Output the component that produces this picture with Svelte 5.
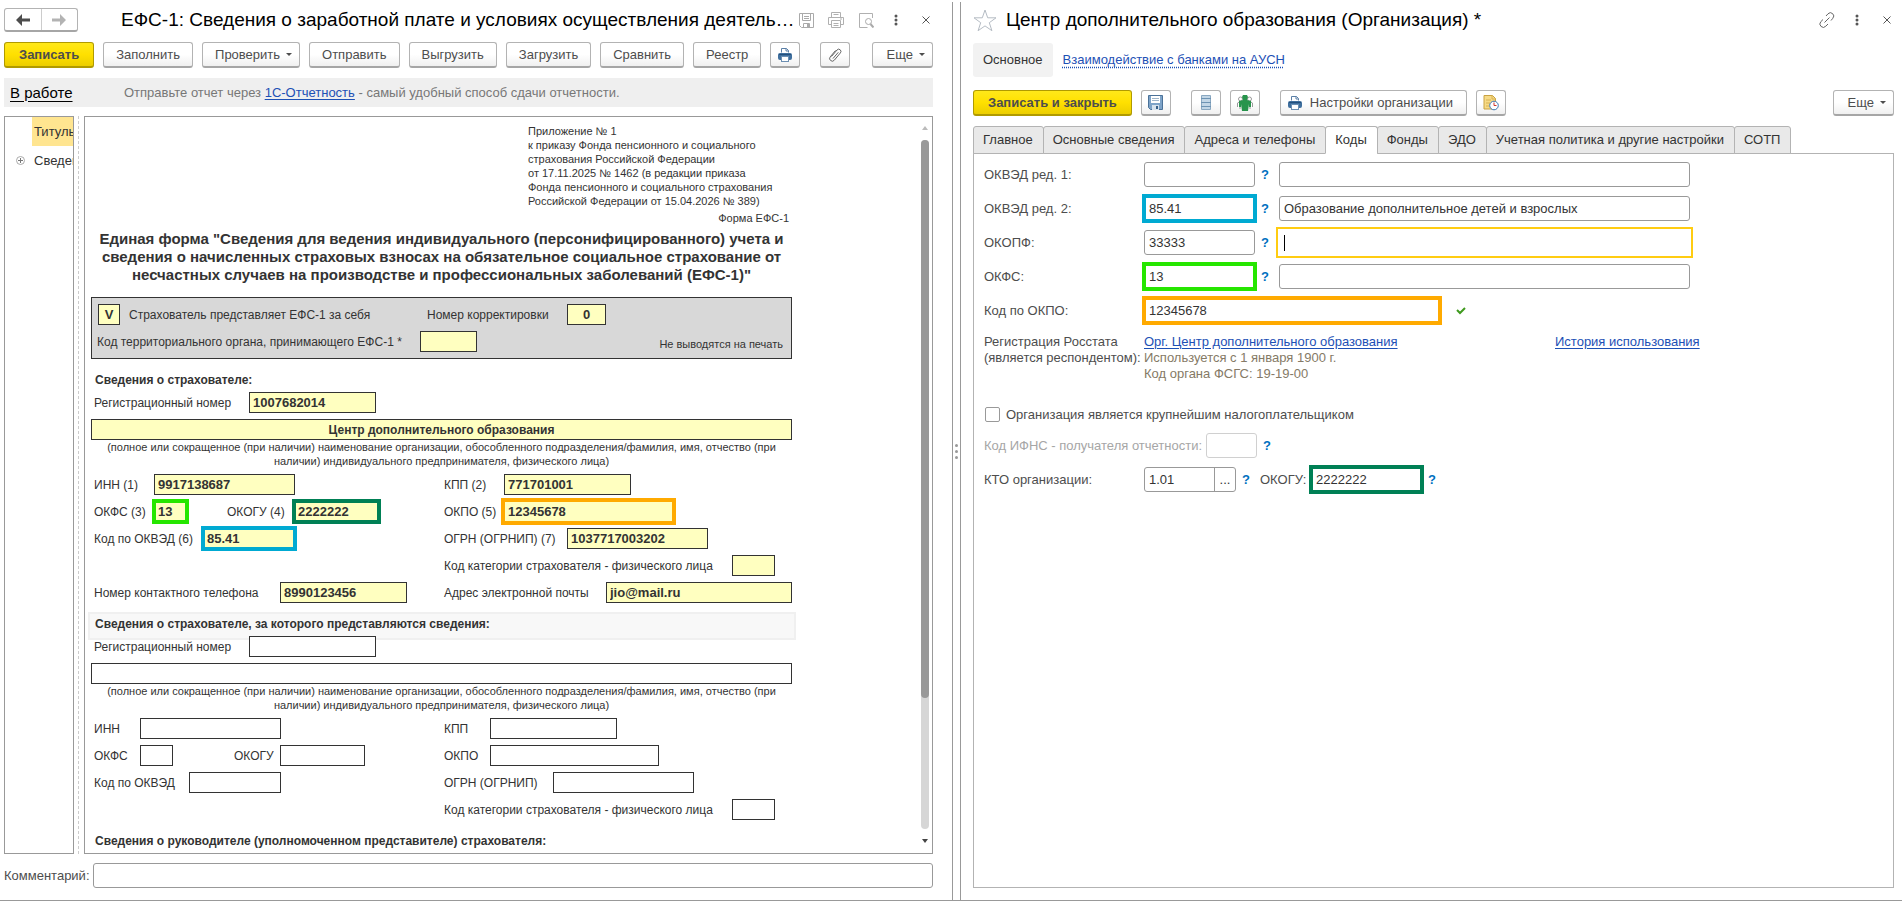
<script lang="ts">
type Field = {
  label: string
  labelWidth: number
  width: number
  value?: string
  mark?: 'green' | 'blue' | 'teal' | 'orange'
  gap?: number
}
type Row = { left: Field[]; right: Field[] }

const commands = ['Отправить', 'Выгрузить', 'Загрузить', 'Сравнить', 'Реестр']

const tabs = [
  'Главное',
  'Основные сведения',
  'Адреса и телефоны',
  'Коды',
  'Фонды',
  'ЭДО',
  'Учетная политика и другие настройки',
  'СОТП',
]
const activeTab = 'Коды'

const note =
  '(полное или сокращенное (при наличии) наименование организации, обособленного подразделения/фамилия, имя, отчество (при наличии) индивидуального предпринимателя, физического лица)'

const insurer: Row[] = [
  {
    left: [{ label: 'ИНН (1)', labelWidth: 60, width: 141, value: '9917138687' }],
    right: [{ label: 'КПП (2)', labelWidth: 60, width: 127, value: '771701001' }],
  },
  {
    left: [
      { label: 'ОКФС (3)', labelWidth: 60, width: 33, value: '13', mark: 'green' },
      { label: 'ОКОГУ (4)', labelWidth: 67, width: 85, value: '2222222', mark: 'teal', gap: 40 },
    ],
    right: [{ label: 'ОКПО (5)', labelWidth: 60, width: 169, value: '12345678', mark: 'orange' }],
  },
  {
    left: [{ label: 'Код по ОКВЭД (6)', labelWidth: 109, width: 92, value: '85.41', mark: 'blue' }],
    right: [{ label: 'ОГРН (ОГРНИП) (7)', labelWidth: 123, width: 141, value: '1037717003202' }],
  },
  {
    left: [],
    right: [{ label: 'Код категории страхователя - физического лица', labelWidth: 288, width: 43, value: '' }],
  },
  {
    left: [{ label: 'Номер контактного телефона', labelWidth: 186, width: 127, value: '8990123456' }],
    right: [{ label: 'Адрес электронной почты', labelWidth: 162, width: 186, value: 'jio@mail.ru' }],
  },
]

const represented: Row[] = [
  {
    left: [{ label: 'ИНН', labelWidth: 46, width: 141 }],
    right: [{ label: 'КПП', labelWidth: 46, width: 127 }],
  },
  {
    left: [
      { label: 'ОКФС', labelWidth: 46, width: 33 },
      { label: 'ОКОГУ', labelWidth: 46, width: 85, gap: 61 },
    ],
    right: [{ label: 'ОКПО', labelWidth: 46, width: 169 }],
  },
  {
    left: [{ label: 'Код по ОКВЭД', labelWidth: 95, width: 92 }],
    right: [{ label: 'ОГРН (ОГРНИП)', labelWidth: 109, width: 141 }],
  },
  {
    left: [],
    right: [{ label: 'Код категории страхователя - физического лица', labelWidth: 288, width: 43 }],
  },
]

const codes = [
  { id: 'okved1', label: 'ОКВЭД ред. 1:', value: '', name: '', mark: '' },
  { id: 'okved2', label: 'ОКВЭД ред. 2:', value: '85.41', name: 'Образование дополнительное детей и взрослых', mark: 'blue' },
  { id: 'okopf', label: 'ОКОПФ:', value: '33333', name: '', mark: '' },
  { id: 'okfs', label: 'ОКФС:', value: '13', name: '', mark: 'green' },
]
</script>

{#snippet printer(muted: boolean)}
  {#if muted}
    <svg viewBox="0 0 16 16" width="16" height="16" aria-hidden="true">
      <path d="M3.5 5.5v-5h9v5M3.5 12.5h-3v-7h15v7h-3M3.5 8.5h9v7h-9zM5.5 11.5h5M5.5 13.5h5M5.5 2.5h5M12 7h2" fill="none" stroke="#b0b0b0" />
    </svg>
  {:else}
    <svg viewBox="0 0 16 16" width="16" height="16" aria-hidden="true">
      <path d="M4.5 5.5v-4h5l2 2v2" fill="#fff" stroke="#5a7fa6" />
      <path d="M9 1.5v2.5h2.500" fill="none" stroke="#5a7fa6" />
      <rect x="1" y="6" width="14" height="7" rx="2" fill="#3f6f9e" />
      <path d="M2 7.500h12" stroke="#24507d" />
      <rect x="4.5" y="9.5" width="7" height="5" fill="#fff" stroke="#6c8fb2" />
    </svg>
  {/if}
{/snippet}

{#snippet dots()}
  <svg viewBox="0 0 4 12" width="4" height="12" aria-hidden="true">
    <circle cx="2" cy="2" r="1.500" fill="#555" /><circle cx="2" cy="6" r="1.500" fill="#555" /><circle cx="2" cy="10" r="1.500" fill="#555" />
  </svg>
{/snippet}

{#snippet cross()}
  <svg viewBox="0 0 8 8" width="8" height="8" aria-hidden="true">
    <path d="M.5.5l7 7M7.5.5l-7 7" stroke="#555" fill="none" />
  </svg>
{/snippet}

{#snippet cell(field: Field)}
  <label class="cell" style:margin-left="{field.gap ?? 0}px">
    <span style:width="{field.labelWidth}px">{field.label}</span>
    <input
      class="box {field.mark ? `mark mark--${field.mark}` : ''}"
      class:box--filled={field.value !== undefined}
      style:width="{field.width}px"
      value={field.value ?? ''}
    />
  </label>
{/snippet}

{#snippet block(title: string, rows: Row[], filled: boolean, number: string, company: string)}
  <section class="block">
    <h3 class:shaded={!filled}>{title}</h3>
    <div class="row">
      {@render cell({ label: 'Регистрационный номер', labelWidth: 155, width: 127, value: filled ? number : undefined })}
    </div>
    <input class="box box--wide" class:box--filled={filled} value={company} aria-label="Наименование" />
    <p class="note">{note}</p>
    {#each rows as row}
      <div class="row">
        <div class="half">
          {#each row.left as field}{@render cell(field)}{/each}
        </div>
        <div class="half">
          {#each row.right as field}{@render cell(field)}{/each}
        </div>
      </div>
    {/each}
  </section>
{/snippet}

<div class="app">
  <main class="pane pane--report">
    <header class="title">
      <div class="history">
        <button aria-label="Назад">
          <svg viewBox="0 0 14 12" width="14" height="12"><path d="M0 6l6-6v4.500h8v3H6V12z" fill="#4d4d4d" /></svg>
        </button>
        <button aria-label="Вперед">
          <svg viewBox="0 0 14 12" width="14" height="12"><path d="M14 6L8 0v4.500H0v3h8V12z" fill="#b3b3b3" /></svg>
        </button>
      </div>
      <h1>ЕФС-1: Сведения о заработной плате и условиях осуществления деятель…</h1>
      <div class="window-tools">
        <button aria-label="Сохранить">
          <svg viewBox="0 0 15 15" width="15" height="15">
            <path d="M.5.5h14v14H2.500l-2-2zM3.500.5v7h8v-7M5 3.500h5M5 5.500h5M4.500 14.500v-4h6v4" fill="none" stroke="#aaa" />
            <path d="M8 11h2v3H8z" fill="#aaa" />
          </svg>
        </button>
        <button aria-label="Печать">{@render printer(true)}</button>
        <button aria-label="Просмотр">
          <svg viewBox="0 0 15 15" width="15" height="15">
            <path d="M13.500 5V.5H.5v14h8" fill="none" stroke="#b0b0b0" />
            <circle cx="9.500" cy="8.500" r="3" fill="none" stroke="#aaa" />
            <path d="M11.500 11l3 3.500" stroke="#aaa" stroke-width="2" />
          </svg>
        </button>
        <button aria-label="Дополнительно">{@render dots()}</button>
        <button aria-label="Закрыть">{@render cross()}</button>
      </div>
    </header>

    <div class="toolbar">
      <button class="btn btn--primary">Записать</button>
      <button class="btn">Заполнить</button>
      <button class="btn btn--menu">Проверить<i class="caret"></i></button>
      {#each commands as command}
        <button class="btn">{command}</button>
      {/each}
      <button class="btn btn--icon" aria-label="Печать">{@render printer(false)}</button>
      <button class="btn btn--icon btn--apart" aria-label="Файлы">
        <svg viewBox="0 0 14 14" width="14" height="14">
          <path d="M3.500 8.500L9 2a2.200 2.200 0 0 1 3.400 2.900l-6 7.200a2.600 2.600 0 0 1-4.200-3.200L7.500 2.500M5 10.500l5.300-6.200" fill="none" stroke="#666" />
        </svg>
      </button>
      <button class="btn btn--menu btn--more">Еще<i class="caret"></i></button>
    </div>

    <div class="status">
      <a class="state" href="#state">В работе</a>
      <span>Отправьте отчет через <a class="link" href="#report">1С-Отчетность</a> - самый удобный способ сдачи отчетности.</span>
    </div>

    <div class="workspace">
      <ul class="tree">
        <li><span class="tree__item tree__item--active">Титульный лист</span></li>
        <li>
          <svg viewBox="0 0 9 9" width="9" height="9" aria-hidden="true">
            <circle cx="4.500" cy="4.500" r="4" fill="none" stroke="#aaa" /><path d="M2 4.500h5M4.500 2v5" stroke="#777" />
          </svg>
          <span class="tree__item">Сведения</span>
        </li>
      </ul>
      <div class="divider"></div>
      <div class="document">
        <div class="sheet">
          <p class="appendix">
            Приложение № 1<br />
            к приказу Фонда пенсионного и социального<br />
            страхования Российской Федерации<br />
            от 17.11.2025 № 1462 (в редакции приказа<br />
            Фонда пенсионного и социального страхования<br />
            Российской Федерации от 15.04.2026 № 389)
          </p>
          <p class="form-code">Форма ЕФС-1</p>
          <h2>
            Единая форма "Сведения для ведения индивидуального (персонифицированного) учета и<br />
            сведения о начисленных страховых взносах на обязательное социальное страхование от<br />
            несчастных случаев на производстве и профессиональных заболеваний (ЕФС-1)"
          </h2>
          <div class="summary">
            <div class="row">
              <label class="cell self">
                <input class="box box--filled box--center" value="V" />
                <span>Страхователь представляет ЕФС-1 за себя</span>
              </label>
              <label class="cell correction">
                <span>Номер корректировки</span>
                <input class="box box--filled box--center" value="0" />
              </label>
            </div>
            <div class="row">
              <label class="cell authority">
                <span>Код территориального органа, принимающего ЕФС-1 *</span>
                <input class="box box--filled" value="" />
              </label>
              <span class="not-printed">Не выводятся на печать</span>
            </div>
          </div>
          {@render block('Сведения о страхователе:', insurer, true, '1007682014', 'Центр дополнительного образования')}
          {@render block('Сведения о страхователе, за которого представляются сведения:', represented, false, '', '')}
          <section class="block">
            <h3>Сведения о руководителе (уполномоченном представителе) страхователя:</h3>
          </section>
        </div>
        <div class="scroll" aria-hidden="true">
          <i class="scroll__up"></i>
          <div class="scroll__track"><div class="scroll__thumb"></div></div>
          <i class="scroll__down"></i>
        </div>
      </div>
    </div>

    <label class="comment">
      <span>Комментарий:</span>
      <input class="input" />
    </label>
  </main>

  <div class="splitter" aria-hidden="true"><i></i><i></i><i></i></div>

  <aside class="pane pane--org">
    <header class="title">
      <svg class="star" viewBox="0 0 24 23" width="24" height="23" aria-hidden="true">
        <path d="M12 1l2.700 7.800h8.300l-6.700 4.900 2.600 8L12 16.900l-6.900 4.800 2.600-8L1 8.800h8.300z" fill="none" stroke="#b5bcc4" />
      </svg>
      <h1>Центр дополнительного образования (Организация) *</h1>
      <div class="window-tools">
        <button aria-label="Ссылка">
          <svg viewBox="0 0 16 16" width="16" height="16">
            <path d="M7 4l2-2.200a3.100 3.100 0 0 1 4.800 4.500L12 8.500M9 12l-2.200 2.200a3.100 3.100 0 0 1-5-4.500L4 7.500M5.500 10.500l5-5" fill="none" stroke="#666" />
          </svg>
        </button>
        <button aria-label="Дополнительно">{@render dots()}</button>
        <button aria-label="Закрыть">{@render cross()}</button>
      </div>
    </header>

    <nav class="sections">
      <a class="sections__current" href="#main">Основное</a>
      <a class="sections__link" href="#banks">Взаимодействие с банками на АУСН</a>
    </nav>

    <div class="toolbar toolbar--org">
      <button class="btn btn--primary">Записать и закрыть</button>
      <button class="btn btn--icon" aria-label="Записать">
        <svg viewBox="0 0 15 15" width="15" height="15">
          <path d="M.5.5h14v14H2.500l-2-2z" fill="#7da3c8" stroke="#4b7299" />
          <path d="M3 1h9v7H3z" fill="#fff" /><path d="M4 3.500h7M4 5.500h7" stroke="#9db4c9" />
          <path d="M4 10h7v5H4z" fill="#d6e2ed" /><path d="M8 11h2v3H8z" fill="#355f88" />
        </svg>
      </button>
      <button class="btn btn--icon btn--apart" aria-label="Список">
        <svg viewBox="0 0 10 15" width="10" height="15">
          <path d="M.5.5h9v14h-9z" fill="#c2d6e6" stroke="#8aa8c1" /><path d="M0 3.500h10M0 7.500h10M0 11.500h10" stroke="#6d93b3" />
        </svg>
      </button>
      <button class="btn btn--icon" aria-label="Контрагент">
        <svg viewBox="0 0 16 16" width="16" height="16">
          <g fill="#fff" stroke="#9a9a9a"><circle cx="3.500" cy="4" r="2" /><circle cx="12.500" cy="4" r="2" /><path d="M3 14V6.500L.5 8v4M13 14V6.500L15.500 8v4" /></g>
          <path d="M6 0h4l1 2-1 3 4 1v6h-2v-3l-1 7H5l-1-7v3H2V6l4-1-1-3z" fill="#28944c" />
        </svg>
      </button>
      <button class="btn btn--apart btn--settings">{@render printer(false)}<span>Настройки организации</span></button>
      <button class="btn btn--icon" aria-label="История">
        <svg viewBox="0 0 16 16" width="16" height="16">
          <path d="M1 .5h8.500l3 3V14H1z" fill="#f6da86" stroke="#c9a243" /><path d="M9 .5v3.500h3.500M3 5h5M3 8h4M3 11h3" fill="none" stroke="#d8b252" />
          <circle cx="11" cy="10.500" r="4.300" fill="#fff" stroke="#3f78b5" /><path d="M11 7.500v3h2.500" fill="none" stroke="#d0342c" />
        </svg>
      </button>
      <button class="btn btn--menu btn--more">Еще<i class="caret"></i></button>
    </div>

    <div class="tabs" role="tablist">
      {#each tabs as tab}
        <button class="tab" class:tab--active={tab === activeTab} role="tab" aria-selected={tab === activeTab}>{tab}</button>
      {/each}
    </div>

    <div class="panel">
      {#each codes as code}
        <div class="line">
          <label class="caption" for={code.id}>{code.label}</label>
          <input class="input code {code.mark ? `mark mark--${code.mark}` : ''}" id={code.id} value={code.value} />
          <a class="help" href="#help">?</a>
          {#if code.id === 'okopf'}
            <div class="input name name--focus"><i class="cursor"></i><input aria-label={code.label} /></div>
          {:else}
            <input class="input name" value={code.name} aria-label={code.label} />
          {/if}
        </div>
      {/each}
      <div class="line">
        <label class="caption" for="okpo">Код по ОКПО:</label>
        <input class="input okpo mark mark--orange" id="okpo" value="12345678" />
        <svg class="check" viewBox="0 0 10 8" width="10" height="8" aria-hidden="true">
          <path d="M1 3l3 3 5-5" fill="none" stroke="#3f9a1e" stroke-width="2" />
        </svg>
      </div>

      <div class="registration">
        <span class="caption">Регистрация Росстата<br />(является респондентом):</span>
        <div class="registration__info">
          <a class="link" href="#org">Орг. Центр дополнительного образования</a><br />
          Используется с 1 января 1900 г.<br />
          Код органа ФСГС: 19-19-00
        </div>
        <a class="link" href="#history">История использования</a>
      </div>

      <label class="largest">
        <input type="checkbox" />
        <span>Организация является крупнейшим налогоплательщиком</span>
      </label>

      <div class="line line--disabled">
        <label for="ifns">Код ИФНС - получателя отчетности:</label>
        <input class="input ifns" id="ifns" disabled />
        <a class="help" href="#help">?</a>
      </div>

      <div class="line">
        <label class="caption" for="kto">КТО организации:</label>
        <div class="input picker">
          <input id="kto" value="1.01" />
          <button aria-label="Выбрать">...</button>
        </div>
        <a class="help" href="#help">?</a>
        <label class="okogu-label" for="okogu">ОКОГУ:</label>
        <input class="input code mark mark--teal" id="okogu" value="2222222" />
        <a class="help" href="#help">?</a>
      </div>
    </div>
  </aside>
</div>

<style>
  :global(body) {
    margin: 0;
    background: #fff;
  }

  .app {
    display: grid;
    grid-template-columns: minmax(0, 953fr) 7px minmax(0, 942fr);
    box-sizing: border-box;
    min-height: 100vh;
    padding-top: 2px;
    border-bottom: 1px solid #999;
    font: 13px/16px 'Liberation Sans', Arial, sans-serif;
    color: #4d4d4d;
  }

  .app :is(*, ::before, ::after) {
    box-sizing: border-box;
  }

  :where(.app) :where(input, button) {
    margin: 0;
    color: inherit;
    font: inherit;
  }

  :where(.app) :where(h1, h2, h3, p, ul) {
    margin: 0;
    padding: 0;
  }

  .pane {
    display: flex;
    flex-direction: column;
  }

  .pane--report {
    padding: 6px 19px 12px 4px;
    border-right: 1px solid #999;
  }

  .pane--org {
    padding: 6px 8px 12px 12px;
    border-left: 1px solid #999;
  }

  .title {
    display: flex;
    align-items: center;
    height: 24px;
  }

  h1 {
    flex: 1;
    min-width: 0;
    color: #000;
    font-size: 19px;
    font-weight: 400;
    line-height: 24px;
    white-space: nowrap;
  }

  .history {
    display: flex;
    width: 74px;
    height: 24px;
    margin-right: 43px;
    border: 1px solid #b3b3b3;
    border-bottom: 2px solid #a6a6a6;
    border-radius: 3px;
  }

  .history button {
    display: flex;
    flex: 1;
    align-items: center;
    justify-content: center;
    padding: 0;
    border: 0;
    background: none;
  }

  .history button + button {
    border-left: 1px solid #ccc;
  }

  .window-tools {
    display: flex;
    margin-right: -8px;
  }

  .window-tools button {
    display: flex;
    align-items: center;
    justify-content: center;
    width: 30px;
    height: 24px;
    padding: 0;
    border: 0;
    background: none;
  }

  .star {
    margin-right: 9px;
  }

  .toolbar {
    display: flex;
    gap: 9px;
    margin-top: 10px;
  }

  .toolbar--org {
    margin-top: 13px;
  }

  .btn {
    display: flex;
    align-items: center;
    justify-content: center;
    height: 26px;
    padding: 0 12px;
    border: 1px solid #b3b3b3;
    border-bottom: 2px solid #a6a6a6;
    border-radius: 3px;
    background: linear-gradient(#fff 50%, #f0f0f0);
    white-space: nowrap;
  }

  .btn--primary {
    padding: 0 14px;
    border-color: #b09a00;
    background: linear-gradient(#ffe81a, #ffe000 50%, #ecce00);
    font-weight: 700;
  }

  .btn--menu {
    padding-right: 7px;
  }

  .btn--icon {
    width: 30px;
    padding: 0;
  }

  .btn--apart {
    margin-left: 11px;
  }

  .btn--settings {
    gap: 7px;
    padding: 0 13px 0 6px;
  }

  .btn--more {
    margin-left: auto;
    padding-left: 14px;
  }

  .caret {
    margin-left: 6px;
    border: 3px solid transparent;
    border-top-color: #4d4d4d;
    border-bottom: 0;
  }

  .status {
    display: flex;
    align-items: center;
    height: 29px;
    margin-top: 10px;
    padding-left: 6px;
    background: #efefef;
    color: #777;
  }

  .state {
    width: 114px;
    color: #000;
    font-size: 15px;
    text-underline-offset: 3px;
  }

  .link {
    color: #1d50b5;
    text-underline-offset: 2px;
  }

  .workspace {
    display: flex;
    flex: 1;
    margin-top: 9px;
  }

  .tree {
    width: 70px;
    overflow: hidden;
    border: 1px solid #999;
    list-style: none;
    color: #333;
  }

  .tree li {
    display: flex;
    align-items: center;
    justify-content: flex-end;
    height: 29px;
    padding-left: 11px;
  }

  .tree li svg {
    flex-shrink: 0;
    margin-right: auto;
  }

  .tree__item {
    width: 41px;
    padding: 7px 0 6px 2px;
    overflow: hidden;
    white-space: nowrap;
  }

  .tree__item--active {
    background: #ffe590;
  }

  .divider {
    margin: 0 5px 0 4px;
    border-left: 1px dashed #ccc;
  }

  .document {
    display: flex;
    flex: 1;
    justify-content: space-between;
    padding: 0 3px 4px 6px;
    border: 1px solid #999;
    color: #333;
    font-size: 12px;
  }

  .sheet {
    width: 701px;
    padding-top: 7px;
  }

  .appendix,
  .form-code,
  .note,
  .not-printed {
    font-size: 11px;
    line-height: 14px;
  }

  .appendix {
    padding-left: 437px;
  }

  .form-code {
    margin-top: 3px;
    padding-right: 3px;
    text-align: right;
  }

  h2 {
    margin-top: 5px;
    font-size: 15px;
    line-height: 18px;
    text-align: center;
    white-space: nowrap;
  }

  .summary {
    height: 62px;
    margin-top: 13px;
    padding: 0 8px 0 5px;
    border: 1px solid #333;
    background: #d8d8d8;
  }

  .row {
    display: flex;
    margin-top: 6px;
  }

  .half {
    display: flex;
    flex: 0 0 350px;
  }

  .cell {
    display: flex;
    align-items: center;
    height: 21px;
    white-space: nowrap;
  }

  .block .cell:first-child {
    padding-left: 3px;
  }

  .box {
    height: 21px;
    padding: 0 3px;
    border: 1px solid #333;
    border-radius: 0;
    background: #fff;
    font-size: 13px;
    font-weight: 700;
  }

  .box--filled {
    background: #ffffc0;
  }

  .box--wide {
    display: block;
    width: 100%;
    margin-top: 6px;
    font-size: 12px;
  }

  .box--center,
  .box--wide {
    text-align: center;
  }

  .self {
    gap: 9px;
    width: 330px;
    padding-left: 1px;
  }

  .self .box {
    width: 22px;
    padding: 0;
  }

  .correction span {
    width: 140px;
  }

  .correction .box {
    width: 39px;
  }

  .authority span {
    width: 323px;
  }

  .authority .box {
    width: 57px;
  }

  .not-printed {
    margin: 6px 0 0 auto;
  }

  .block {
    margin-top: 13px;
  }

  h3 {
    position: relative;
    z-index: 0;
    padding-left: 4px;
    font-size: 12px;
    line-height: 16px;
  }

  h3 + .row {
    position: relative;
    margin-top: 4px;
  }

  .shaded::before {
    content: '';
    position: absolute;
    inset: -4px -4px -8px -3px;
    z-index: -1;
    border: 2px solid #f0f0f0;
    background: #f8f8f8;
  }

  .note {
    padding: 0 12px;
    text-align: center;
  }

  .mark {
    border-radius: 0;
    outline: 4px solid var(--mark);
    outline-offset: -2px;
  }

  .mark--green {
    --mark: #26e600;
  }

  .mark--blue {
    --mark: #00aad2;
  }

  .mark--teal {
    --mark: #008055;
  }

  .mark--orange {
    --mark: #ffaa00;
  }

  .box.mark--orange {
    outline-offset: -1px;
  }

  .scroll {
    display: flex;
    flex-direction: column;
    align-items: center;
    width: 8px;
    padding: 9px 0 6px;
  }

  .scroll__up,
  .scroll__down {
    border: 3px solid transparent;
  }

  .scroll__up {
    border-top: 0;
    border-bottom: 4px solid #bbb;
  }

  .scroll__down {
    border-top: 4px solid #444;
    border-bottom: 0;
  }

  .scroll__track {
    flex: 1;
    width: 8px;
    margin: 10px 0;
    border-radius: 4px;
    background: #d6d6d6;
  }

  .scroll__thumb {
    height: 81%;
    border-radius: 4px;
    background: #999;
  }

  .comment {
    display: flex;
    align-items: center;
    margin-top: 9px;
  }

  .comment span {
    width: 89px;
  }

  .comment .input {
    flex: 1;
  }

  .splitter {
    display: flex;
    flex-direction: column;
    align-items: center;
    justify-content: center;
    gap: 3px;
  }

  .splitter i {
    width: 3px;
    height: 3px;
    border-radius: 50%;
    background: #999;
  }

  .sections {
    display: flex;
    align-items: center;
    gap: 10px;
    margin-top: 11px;
  }

  .sections__current {
    padding: 9px 10px;
    border-radius: 3px;
    background: #f2f2f2;
    color: #333;
    text-decoration: none;
  }

  .sections__link {
    color: #1d50b5;
    text-decoration-style: dotted;
    text-underline-offset: 3px;
  }

  .tabs {
    position: relative;
    display: flex;
    margin-top: 10px;
  }

  .tab {
    height: 28px;
    margin: 0 -1px -1px 0;
    padding: 0 10px 0 9px;
    border: 1px solid #b3b3b3;
    border-radius: 3px 3px 0 0;
    background: #e9e9e9;
    color: #333;
    white-space: nowrap;
  }

  .tab--active {
    border-bottom-color: #fff;
    background: #fff;
  }

  .panel {
    display: flex;
    flex: 1;
    flex-direction: column;
    gap: 9px;
    padding: 8px 10px;
    border: 1px solid #b3b3b3;
  }

  .line {
    display: flex;
    align-items: center;
    height: 25px;
  }

  .line--disabled {
    color: #a6a6a6;
  }

  .caption {
    flex-shrink: 0;
    width: 160px;
  }

  .input {
    height: 25px;
    padding: 0 4px;
    border: 1px solid #999;
    border-radius: 3px;
    background: #fff;
    color: #333;
  }

  .input.mark {
    border-radius: 0;
  }

  .code {
    width: 111px;
  }

  .help {
    width: 24px;
    padding-left: 6px;
    color: #0070c0;
    font-weight: 700;
    text-decoration: none;
  }

  .name {
    width: 411px;
  }

  .name--focus {
    display: flex;
    align-items: center;
    border-color: transparent;
    border-radius: 0;
    outline: 2px solid #fc1;
    outline-offset: 1px;
  }

  .name--focus input,
  .picker input {
    flex: 1;
    min-width: 0;
    padding: 0;
    border: 0;
    outline: 0;
    background: none;
  }

  .cursor {
    width: 1px;
    height: 16px;
    background: #000;
  }

  .okpo {
    width: 296px;
  }

  .check {
    margin-left: 16px;
  }

  .registration {
    display: flex;
    height: 64px;
    padding-top: 2px;
  }

  .registration__info {
    width: 411px;
    color: #857a66;
  }

  .largest {
    display: flex;
    align-items: center;
    gap: 6px;
    height: 19px;
  }

  .largest input {
    appearance: none;
    width: 15px;
    height: 15px;
    margin-left: 1px;
    border: 1px solid #999;
    border-radius: 2px;
  }

  .ifns {
    width: 51px;
    margin-left: 4px;
    border-color: #d0d0d0;
  }

  .picker {
    display: flex;
    width: 92px;
    padding-right: 0;
  }

  .picker button {
    width: 21px;
    padding: 0;
    border: 0;
    border-left: 1px solid #999;
    background: none;
  }

  .okogu-label {
    width: 51px;
  }
</style>
